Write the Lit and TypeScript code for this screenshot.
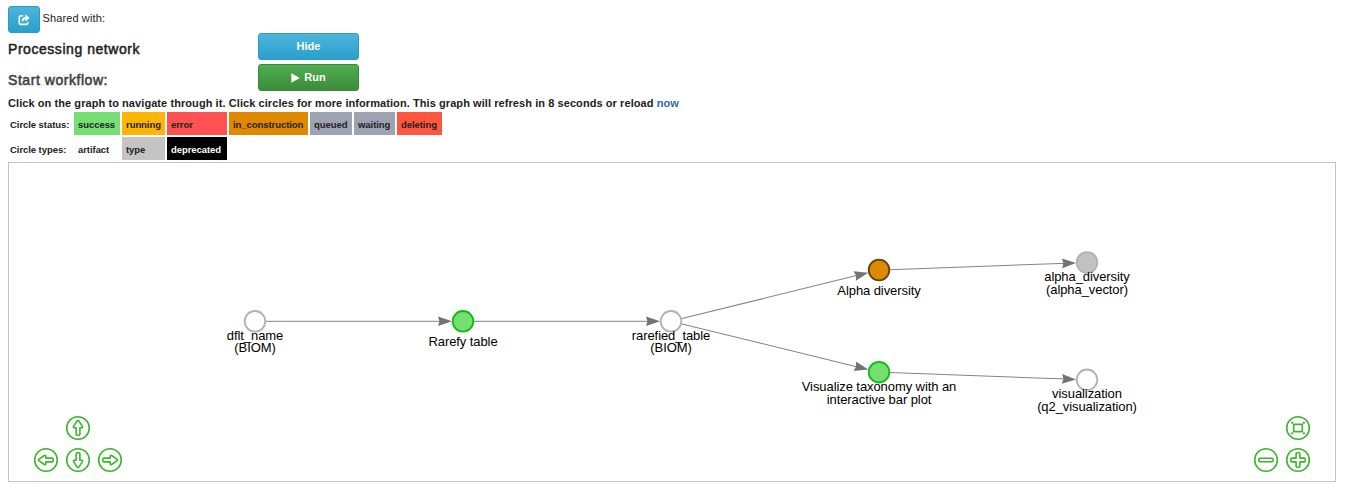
import { LitElement, html, css, svg } from "lit";
import { customElement } from "lit/decorators.js";

interface GraphNode {
  x: number;
  y: number;
  fill: string;
  stroke: string;
  lines: [string, number][];
}

const NODES: GraphNode[] = [
  { x: 255, y: 321.3, fill: "#ffffff", stroke: "#b2b2b2", lines: [["dflt_name", 340], ["(BIOM)", 352]] },
  { x: 463, y: 321.3, fill: "#75df73", stroke: "#0abf0a", lines: [["Rarefy table", 346]] },
  { x: 671, y: 321.3, fill: "#ffffff", stroke: "#b2b2b2", lines: [["rarefied_table", 340], ["(BIOM)", 352]] },
  { x: 879, y: 270, fill: "#e08900", stroke: "#5c4410", lines: [["Alpha diversity", 295]] },
  { x: 879, y: 372.2, fill: "#75df73", stroke: "#0abf0a", lines: [["Visualize taxonomy with an", 391], ["interactive bar plot", 404]] },
  { x: 1087, y: 262.5, fill: "#c2c2c2", stroke: "#b2b2b2", lines: [["alpha_diversity", 281], ["(alpha_vector)", 294]] },
  { x: 1087, y: 379.8, fill: "#ffffff", stroke: "#b2b2b2", lines: [["visualization", 398], ["(q2_visualization)", 411]] },
];

const EDGES: [number, number][] = [[0, 1], [1, 2], [2, 3], [2, 4], [3, 5], [4, 6]];

const RADIUS = 10.3;

const ARROW = "M-.7 -7.3 Q0 -8 .7 -7.3 L4.5 -1.6 Q5 -.2 3.6 -.2 H1.9 V6 Q1.9 7.2 .7 7.2 H-.7 Q-1.9 7.2 -1.9 6 V-.2 H-3.6 Q-5 -.2 -4.5 -1.6 Z";

@customElement("workflow-graph")
class WorkflowGraph extends LitElement {
  static styles = css`
    :host { display: block; height: 318px; border: 1px solid #c4c4c4; }
    .canvas { display: block; width: 100%; height: 318px; }
    .edge { stroke: #848484; stroke-width: 1; }
    .head { fill: #737373; }
    .node { stroke-width: 1.8; }
    .label { font: 13px "Liberation Sans", Arial, sans-serif; letter-spacing: -0.08px; fill: #000; text-anchor: middle; }
    .nav { fill: none; stroke: #3bb52c; stroke-width: 1.6; stroke-linejoin: round; }
    .corner { stroke: #96a094; stroke-width: 2.4; }
  `;

  edge([a, b]: [number, number]) {
    const from = NODES[a];
    const to = NODES[b];
    const dx = to.x - from.x;
    const dy = to.y - from.y;
    const len = Math.hypot(dx, dy);
    const angle = (Math.atan2(dy, dx) * 180) / Math.PI;
    return svg`<g transform="translate(${from.x} ${from.y}) rotate(${angle})">
      <line class="edge" x1=${RADIUS} y1="0" x2=${len - 20} y2="0"></line>
      <path class="head" transform="translate(${len - 11} 0)" d="M0 0 L-14 -4.8 L-12.6 0 L-14 4.8 Z"></path>
    </g>`;
  }

  node(n: GraphNode) {
    return svg`<circle class="node" cx=${n.x} cy=${n.y} r=${RADIUS} fill=${n.fill} stroke=${n.stroke}></circle>
      ${n.lines.map(([text, y]) => svg`<text class="label" x=${n.x} y=${y}>${text}</text>`)}`;
  }

  arrow(x: number, y: number, turn: number) {
    return svg`<g class="nav" transform="translate(${x} ${y}) rotate(${turn})">
      <circle r="11.3"></circle><path d=${ARROW}></path>
    </g>`;
  }

  render() {
    return html`<svg class="canvas" viewBox="9 163 1326 318">
      ${EDGES.map((e) => this.edge(e))}
      ${NODES.map((n) => this.node(n))}
      ${this.arrow(78, 428, 0)}
      ${this.arrow(46, 460, -90)}
      ${this.arrow(78, 460, 180)}
      ${this.arrow(110, 460, 90)}
      <g class="nav" transform="translate(1298 428)">
        <path class="corner" d="M-5 -4.4 L-6.8 -6 M5 -4.4 L6.8 -6 M-5 4.6 L-6.8 6.2 M5 4.6 L6.8 6.2"></path>
        <circle r="11.3"></circle>
        <rect x="-4.3" y="-3.6" width="8.6" height="7.2"></rect>
      </g>
      <g class="nav" transform="translate(1266 460)">
        <circle r="11.3"></circle>
        <rect x="-7.2" y="-1.8" width="14.4" height="3.6" rx="1.2"></rect>
      </g>
      <g class="nav" transform="translate(1298 460)">
        <circle r="11.3"></circle>
        <path d="M-1 -7.2 H1 Q1.9 -7.2 1.9 -6.2 V-1.9 H6.2 Q7.2 -1.9 7.2 -1 V1 Q7.2 1.9 6.2 1.9 H1.9 V6.2 Q1.9 7.2 1 7.2 H-1 Q-1.9 7.2 -1.9 6.2 V1.9 H-6.2 Q-7.2 1.9 -7.2 1 V-1 Q-7.2 -1.9 -6.2 -1.9 H-1.9 V-6.2 Q-1.9 -7.2 -1 -7.2 Z"></path>
      </g>
    </svg>`;
  }
}

@customElement("app-root")
class AppRoot extends LitElement {
  static styles = css`
    :host {
      display: block; box-sizing: border-box; height: 489px; padding: 6px 10px 0 8px; overflow: hidden;
      background: #fff; color: #222; font: 11px/16px "Liberation Sans", Arial, sans-serif; white-space: nowrap;
    }
    .share { display: flex; height: 27px; gap: 2.5px; }
    .share-text { padding-top: 4px; letter-spacing: 0.12px; }
    .btn {
      box-sizing: border-box; display: flex; align-items: center; justify-content: center; gap: 4px;
      height: 27px; width: 101px; padding: 0; border: 1px solid #2b9cc4; border-radius: 3px;
      background: linear-gradient(#4db5dc, #2a9fcb); color: #fff;
      font: bold 11px/15px "Liberation Sans", Arial, sans-serif;
    }
    .icon { width: 32px; }
    .run { border-color: #3a8a3a; background: linear-gradient(#50ad50, #3b8c3b); }
    .controls { display: grid; grid-template-columns: 250px 101px; row-gap: 4px; height: 58px; }
    .title {
      margin: 0; padding-top: 8px; font: 14px/17px "Liberation Sans", Arial, sans-serif;
      letter-spacing: 0.55px; -webkit-text-stroke: 0.5px currentColor;
    }
    .tint { background: #f9f9f9; color: #3c3c3c; }
    .hint { height: 19px; padding-top: 4px; box-sizing: border-box; font-weight: bold; letter-spacing: 0.074px; }
    .now { color: #2a6ca8; text-decoration: none; }
    .legend {
      display: grid; grid-template-columns: 64px 46px 43px 60px 79px 42px 41px 45px;
      grid-auto-rows: 23px; gap: 2px; height: 48px; margin: 2px 0;
      font: bold 9.5px/25px "Liberation Sans", Arial, sans-serif; letter-spacing: -0.06px;
    }
    .key { padding-left: 2px; grid-column: 1; }
    .cell { padding-left: 4px; }
    .success { background: #75df73; }
    .running { background: #ffb505; }
    .error { background: #ff5151; }
    .construction { background: #e08900; }
    .idle { background: #9ea3b1; }
    .deleting { background: #ff573f; }
    .type { background: #c4c4c4; }
    .deprecated { background: #000; color: #fff; }
  `;

  render() {
    return html`
      <div class="share">
        <button class="btn icon" aria-label="Share">
          <svg width="12" height="12" viewBox="0 0 12 12" fill="none" stroke="#fff">
            <path stroke-width="1.6" d="M5.2 1.7 H3 Q1.3 1.7 1.3 3.4 V8.7 Q1.3 10.4 3 10.4 H8 Q9.7 10.4 9.7 8.7 V7.8"></path>
            <path stroke-width="1.8" d="M4.5 7.6 Q4.6 4 8 4"></path>
            <path fill="#fff" stroke="none" d="M7.4 .4 L11.7 4 L7.4 7.6 Z"></path>
          </svg>
        </button>
        <span class="share-text">Shared with:</span>
      </div>
      <div class="controls">
        <h4 class="title"><span>Processing network</span></h4>
        <button class="btn">Hide</button>
        <h4 class="title"><span class="tint">Start workflow:</span></h4>
        <button class="btn run">
          <svg width="9" height="10" viewBox="0 0 9 10"><path fill="#fff" d="M.3 .2 L8.8 5 L.3 9.8 Z"></path></svg>Run
        </button>
      </div>
      <div class="hint">Click on the graph to navigate through it. Click circles for more information. This graph will refresh in <span>8</span> seconds or reload <a class="now">now</a></div>
      <div class="legend">
        <span class="key">Circle status:</span>
        <span class="cell success">success</span>
        <span class="cell running">running</span>
        <span class="cell error">error</span>
        <span class="cell construction">in_construction</span>
        <span class="cell idle">queued</span>
        <span class="cell idle">waiting</span>
        <span class="cell deleting">deleting</span>
        <span class="key">Circle types:</span>
        <span class="cell">artifact</span>
        <span class="cell type">type</span>
        <span class="cell deprecated">deprecated</span>
      </div>
      <workflow-graph></workflow-graph>
    `;
  }
}
